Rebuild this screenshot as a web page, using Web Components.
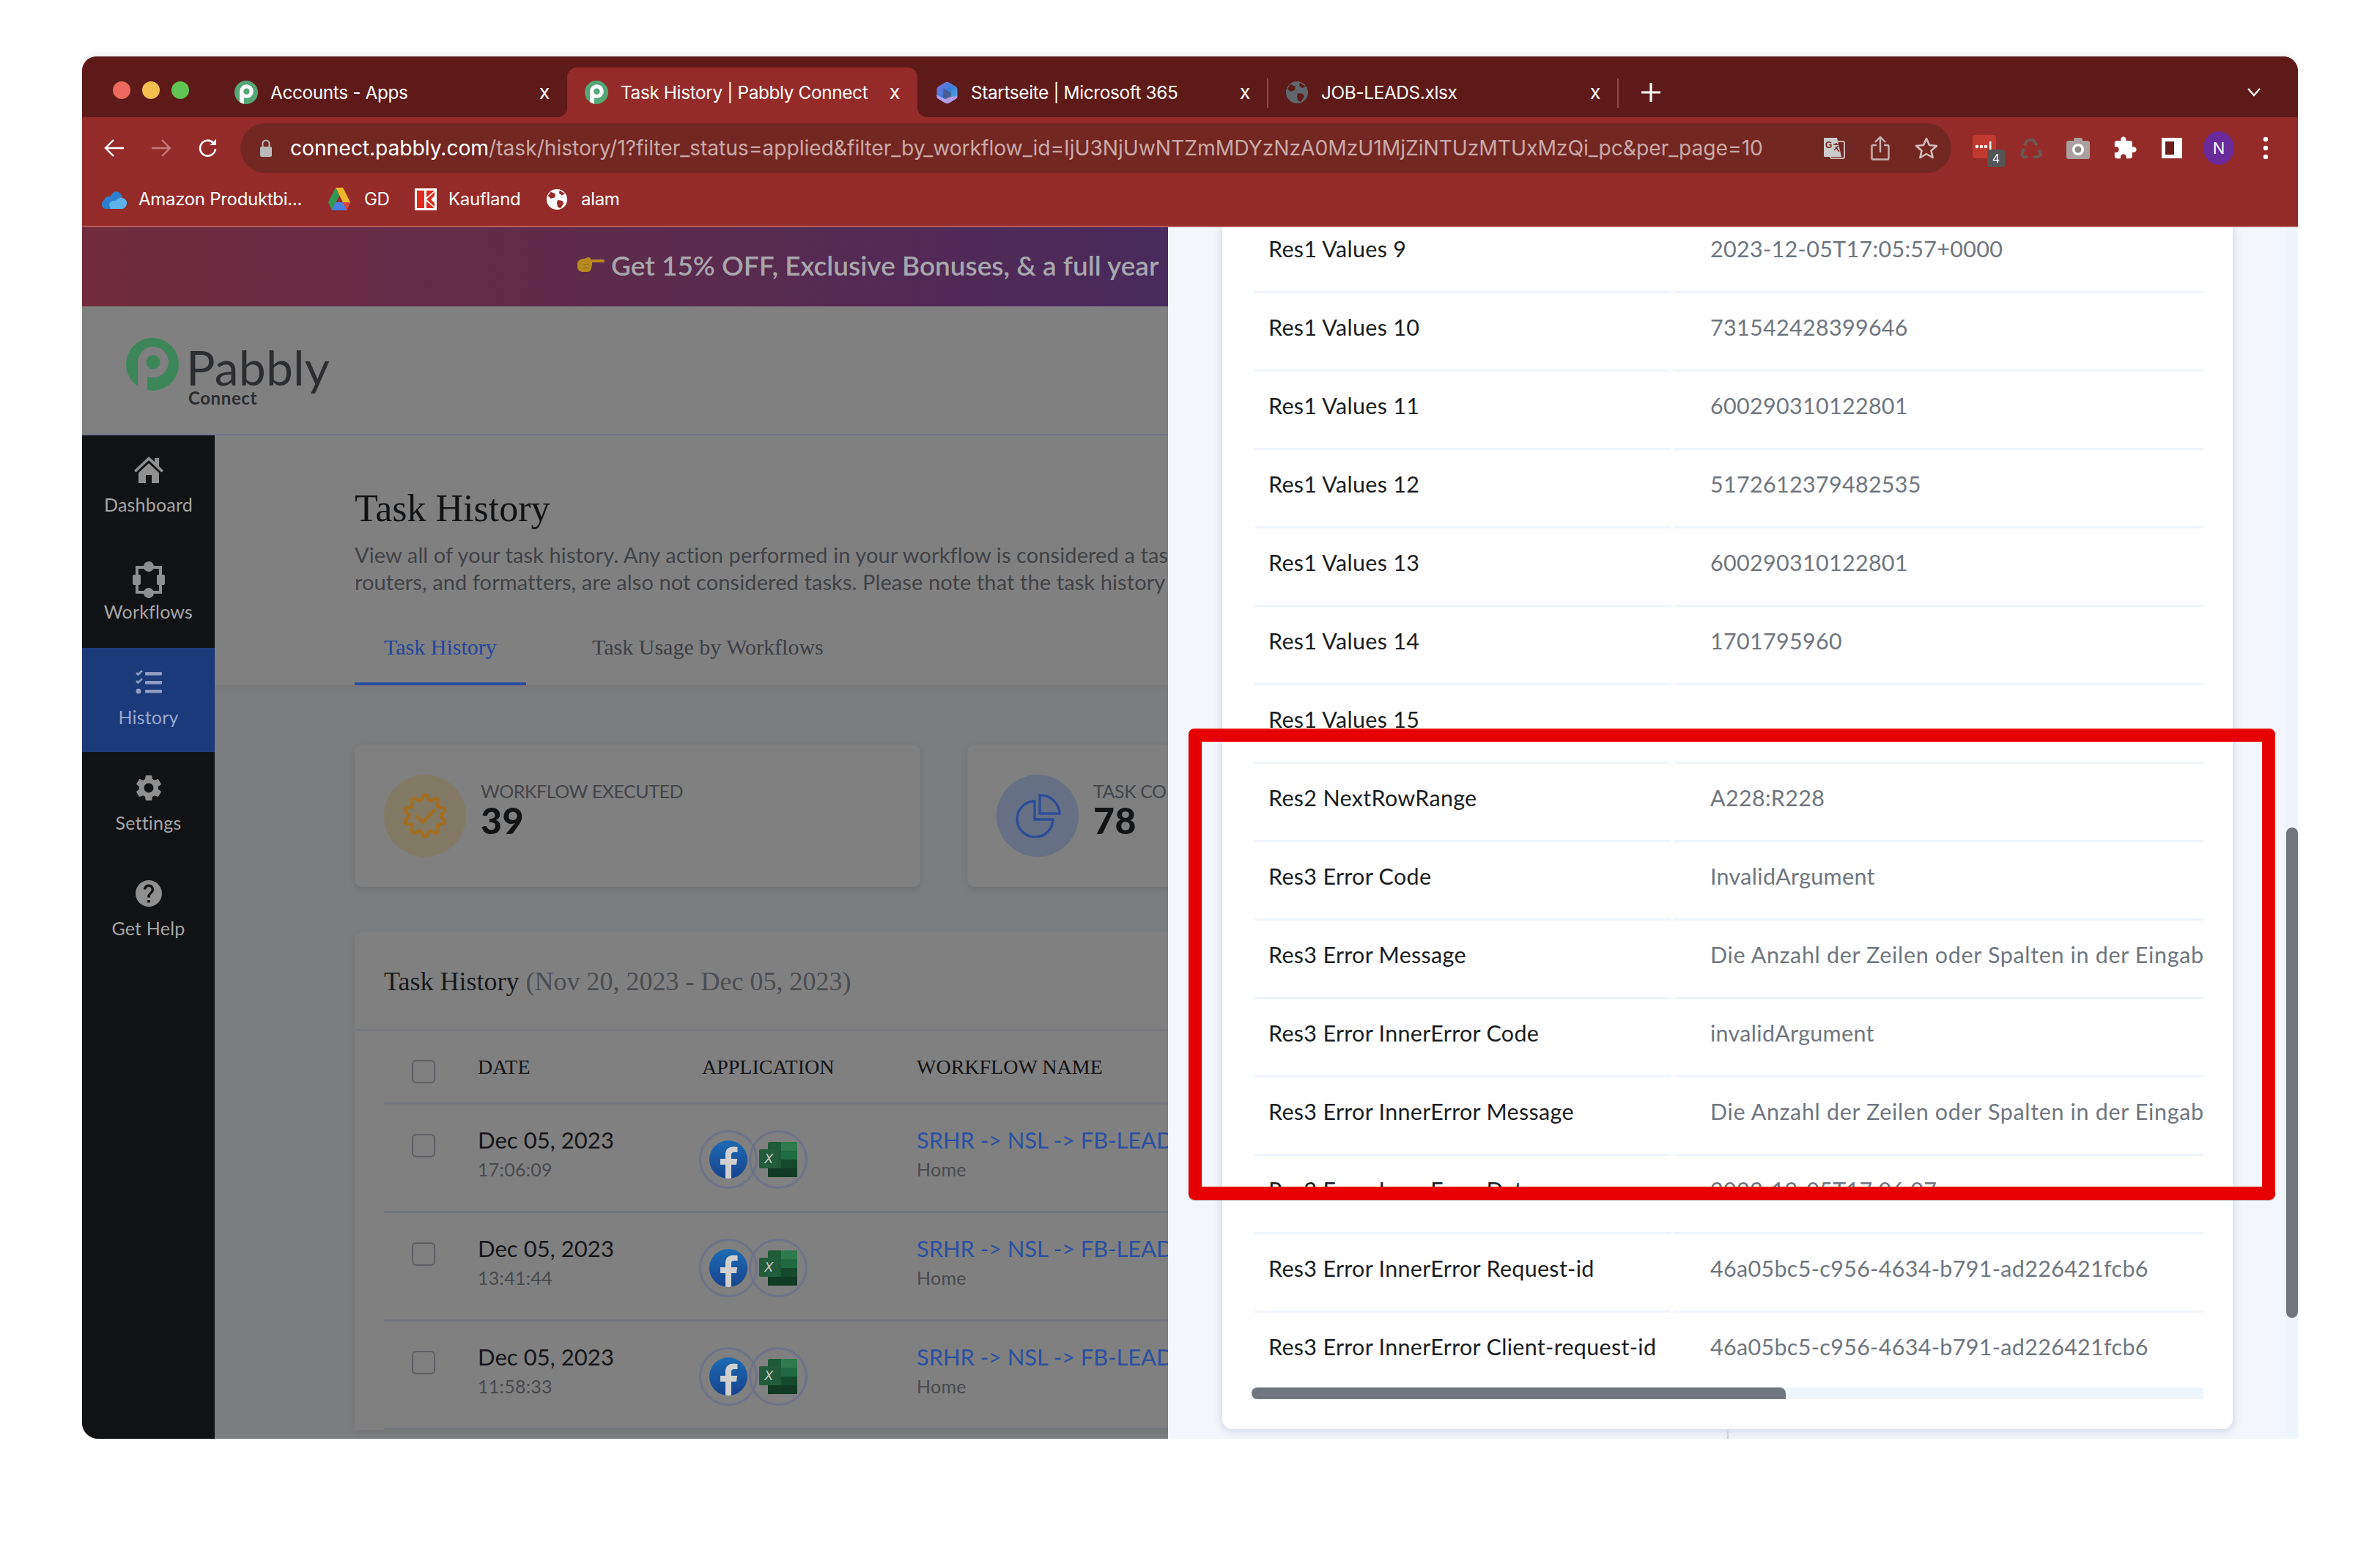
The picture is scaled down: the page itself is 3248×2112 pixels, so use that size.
<!DOCTYPE html>
<html lang="en"><head><meta charset="utf-8"><title>Task History | Pabbly Connect</title>
<style>
html,body{margin:0;background:#fff}
body{width:3248px;height:2112px;overflow:hidden;padding:77px 112px 0;box-sizing:border-box;font-family:Lato,"Liberation Sans",sans-serif}
</style></head><body>
<app-window></app-window>
<script>
const pabbly=(bg,fg)=>`<svg viewBox="0 0 72 72" width="100%" height="100%"><defs><clipPath id="pc"><circle cx="36" cy="36" r="36"/></clipPath></defs><circle cx="36" cy="36" r="36" fill="${bg}"/><g clip-path="url(#pc)"><circle cx="37" cy="33" r="21" fill="${fg}"/><rect x="16" y="33" width="13" height="40" fill="${fg}"/><circle cx="37" cy="33" r="9.5" fill="${bg}"/></g></svg>`;
const scallop=(()=>{let d='';for(let i=0;i<=240;i++){const t=i/240*Math.PI*2,r=25+3.4*Math.cos(t*10),x=32+r*Math.sin(t),y=32-r*Math.cos(t);d+=(i?'L':'M')+x.toFixed(2)+' '+y.toFixed(2)}return d+'Z'})();
const ICONS={
 pabbly:pabbly('#55a876','#fff'),
 logo:pabbly('#3c8659','#808080'),
 ms365:`<svg viewBox="0 0 32 34" width="100%" height="100%"><defs><linearGradient id="m" x1="0" y1="0" x2="1" y2="1"><stop offset="0" stop-color="#7e6fe0"/><stop offset=".5" stop-color="#3a7fd8"/><stop offset="1" stop-color="#5fb7e8"/></linearGradient></defs><path d="M13 1.500c2-1.200 4-1.200 6 0L29 7.500c1.500 1 2.500 2.500 2.500 4.500v10c0 2-1 3.500-2.500 4.500L19 32.500c-2 1.200-4 1.200-6 0L3 26.500C1.500 25.500.5 24 .5 22V12c0-2 1-3.500 2.500-4.500Z" fill="url(#m)"/><path d="M10 10 22 17V24L16 27 10 24Z" fill="#5e1a18" opacity=".35"/><path d="M.5 20 13 27l9-4 9.500 -1c0 2-1 3.500-2.500 4.500L19 32.500c-2 1.200-4 1.200-6 0L3 26.500C1.500 25.500.5 24 .5 22Z" fill="#b59be8"/></svg>`,
 globeDark:`<svg viewBox="0 0 32 32" width="32" height="32"><circle cx="16" cy="16" r="15" fill="#5f676d"/><path d="M7 5 14 8 13 13 7 15 3 11ZM17 17 24 18 26 22 21 29 17 27 16 21ZM20 3 28 8 23 10 19 7Z" fill="#5e1a18"/></svg>`,
 globeWhite:`<svg viewBox="0 0 32 32" width="30" height="30"><circle cx="16" cy="16" r="15" fill="#fff"/><path d="M7 5 14 8 13 13 7 15 3 11ZM17 17 24 18 26 22 21 29 17 27 16 21ZM20 3 28 8 23 10 19 7Z" fill="#952b28"/></svg>`,
 back:`<svg viewBox="0 0 28 26" width="28" height="26" fill="none" stroke="currentColor" stroke-width="2.4"><path d="M27 13H3M13 2 2 13l11 11"/></svg>`,
 fwd:`<svg viewBox="0 0 28 26" width="28" height="26" fill="none" stroke="currentColor" stroke-width="2.4"><path d="M1 13H25M15 2l11 11-11 11"/></svg>`,
 reload:`<svg viewBox="0 0 28 28" width="28" height="28" fill="none" stroke="#fff" stroke-width="2.6"><path d="M24 15a10.5 10.5 0 1 1-3-8.2"/><path d="M25 1.5V10h-8.5Z" fill="#fff" stroke="none"/></svg>`,
 lock:`<svg viewBox="0 0 18 26" width="18" height="26"><path d="M4.5 11V7a4.500 4.500 0 0 1 9 0v4" fill="none" stroke="#b9b9b9" stroke-width="2"/><rect x="1" y="11" width="16" height="14" rx="2" fill="#b9b9b9"/></svg>`,
 translate:`<svg viewBox="0 0 30 30" width="30" height="30"><rect x="10" y="6" width="19" height="23" rx="2" fill="none" stroke="#c9b2b2" stroke-width="2"/><path d="M1 2a1 1 0 0 1 1-1h17l6 26H2a1 1 0 0 1-1-1Z" fill="#cbcbcb"/><text x="3" y="15" font-family="Liberation Sans" font-size="12" font-weight="700" fill="#752723">G</text><path d="M14 10h8M18 8v3M15 18l6-6M17 13l5 7" stroke="#752723" stroke-width="1.500" fill="none"/></svg>`,
 share:`<svg viewBox="0 0 26 34" width="26" height="34" fill="none" stroke="#c9b2b2" stroke-width="2.4"><path d="M8 13H3a1.500 1.500 0 0 0-1.500 1.500V31A1.500 1.500 0 0 0 3 32.500h20a1.500 1.500 0 0 0 1.500-1.500V14.500A1.500 1.500 0 0 0 23 13h-5"/><path d="M13 23V2M6 9l7-7 7 7"/></svg>`,
 star:`<svg viewBox="0 0 32 32" width="32" height="32" fill="none" stroke="#d3bcbc" stroke-width="2.6" stroke-linejoin="round"><path d="m16 3 4 9 10 1-7.500 6.600L24.600 29 16 24l-8.600 5 2.100-9.400L2 13l10-1Z"/></svg>`,
 ext:`<svg viewBox="0 0 56 48" width="56" height="48"><rect x="12" y="0" width="32" height="32" rx="4" fill="#c0392f"/><circle cx="18" cy="16" r="2.300" fill="#fff"/><circle cx="24" cy="16" r="2.300" fill="#fff"/><circle cx="30" cy="16" r="2.300" fill="#fff"/><rect x="35" y="9" width="2.500" height="11" fill="#fff"/><rect x="32" y="20" width="24" height="24" rx="3" fill="#555"/><text x="44" y="38" text-anchor="middle" font-family="Liberation Sans" font-size="17" fill="#fff">4</text></svg>`,
 recycle:`<svg viewBox="0 0 32 32" width="30" height="30" fill="none" stroke="#6b5956" stroke-width="4"><path d="M12 4h7l5 8M27 19l3 7-4 3h-7M11 29H5l-3-4 4-8M6 12l5-8"/></svg>`,
 camera:`<svg viewBox="0 0 32 30" width="32" height="30"><path d="M10 5V3a2 2 0 0 1 2-2h8a2 2 0 0 1 2 2v2h7a3 3 0 0 1 3 3v19a3 3 0 0 1-3 3H3a3 3 0 0 1-3-3V8a3 3 0 0 1 3-3Z" fill="#a9a09f"/><circle cx="16" cy="17" r="8" fill="#fff"/><circle cx="16" cy="17" r="4.500" fill="#8e8786"/></svg>`,
 puzzle:`<svg viewBox="0 0 24 24" width="34" height="34" fill="#fff"><path d="M20.500 11H19V7c0-1.100-.9-2-2-2h-4V3.500C13 2.120 11.880 1 10.500 1S8 2.120 8 3.500V5H4c-1.100 0-1.990.9-1.990 2v3.800H3.500c1.490 0 2.700 1.210 2.700 2.700s-1.210 2.700-2.700 2.700H2V20c0 1.100.9 2 2 2h3.800v-1.500c0-1.490 1.210-2.700 2.700-2.700 1.490 0 2.700 1.210 2.700 2.700V22H17c1.100 0 2-.9 2-2v-4h1.500c1.380 0 2.500-1.120 2.500-2.500S21.880 11 20.500 11z"/></svg>`,
 panel:`<svg viewBox="0 0 28 28" width="28" height="28"><rect width="28" height="28" fill="#fff"/><rect x="5" y="5" width="12" height="18" fill="#6a1f1c"/></svg>`,
 kebab:`<svg viewBox="0 0 8 32" width="8" height="32" fill="#fff"><circle cx="4" cy="4" r="3.200"/><circle cx="4" cy="16" r="3.200"/><circle cx="4" cy="28" r="3.200"/></svg>`,
 plus:`<svg viewBox="0 0 26 26" width="26" height="26" stroke="#fff" stroke-width="3.200"><path d="M13 0v26M0 13h26"/></svg>`,
 chevron:`<svg viewBox="0 0 18 12" width="18" height="12" fill="none" stroke="#fff" stroke-width="2.200"><path d="M1 1l8 9 8-9"/></svg>`,
 cloud:`<svg viewBox="0 0 34 26" width="34" height="26"><path d="M3 14C5 9 9 8 12 9 14 3 20 0 24 4c3 2 4 5 4 7 3 1 6 3 6 7 0 5-4 8-7 8H6c-4 0-6-3-6-6 0-3 1-5 3-6Z" fill="#2f7fd0"/><path d="M12 26H27c3 0 7-3 7-8 0-4-3-6-6-7-4-1-7 1-9 4-4-1-8 1-9 5Z" fill="#5cb3ea"/></svg>`,
 drive:`<svg viewBox="0 0 30 32" width="30" height="32"><path d="M10 0h10l10 20h-10Z" fill="#f2b62a" /><path d="M10 0 0 20l5 11L15 11Z" fill="#2e9a55"/><path d="M5 31h20l5-11H10Z" fill="#4a7ee0"/><path d="M20 20 25 31l5-11Z" fill="#d9443a"/></svg>`,
 kaufland:`<svg viewBox="0 0 30 30" width="30" height="30"><rect width="30" height="30" fill="#fff"/><rect x="3" y="3" width="10" height="24" fill="#e0281e"/><path d="M16 3h11v7l-5 5 5 5v7H16v-8Z" fill="#e0281e"/><path d="M13 15 27 3v2L16 15l11 10v2Z" fill="#fff"/></svg>`,
 home:`<svg viewBox="0 0 40 36" width="40" height="36" fill="#909090"><path d="M20 0 28 7V2h6v11l6 6-2.500 2.500L20 5 2.500 21.500 0 19Z"/><path d="M6 22 20 9l14 13v14H24V25h-8v11H6Z"/></svg>`,
 flows:`<svg viewBox="0 0 44 50" width="44" height="50" fill="none"><rect x="6" y="8" width="32" height="34" fill="none" stroke="#8f8f8f" stroke-width="4"/><circle cx="22" cy="7" r="7" fill="#8f8f8f"/><circle cx="22" cy="43" r="7" fill="#8f8f8f"/><rect x="0" y="18" width="11" height="14" rx="2" fill="#8f8f8f"/><rect x="33" y="18" width="11" height="14" rx="2" fill="#8f8f8f"/></svg>`,
 tasks:`<svg viewBox="0 0 36 34" width="36" height="34" fill="#8d9cc0"><rect x="13" y="3" width="23" height="4.500" rx="1"/><rect x="13" y="15" width="23" height="4.500" rx="1"/><rect x="13" y="27" width="23" height="4.500" rx="1"/><circle cx="4" cy="29" r="3.500"/><path d="M1 4l2.500 2.500L9 1M1 15l2.500 2.500L9 12" fill="none" stroke="#8d9cc0" stroke-width="2.600"/></svg>`,
 gear:`<svg viewBox="2 2 20 20" width="36" height="36" fill="#8f8f8f"><path fill-rule="evenodd" d="M19.140 12.940c.04-.3.06-.61.06-.94 0-.32-.02-.64-.07-.94l2.030-1.580c.18-.14.23-.41.12-.61l-1.920-3.320c-.12-.22-.37-.29-.59-.22l-2.390.96c-.5-.38-1.030-.7-1.620-.94l-.36-2.540c-.04-.24-.24-.41-.48-.41h-3.840c-.24 0-.43.17-.47.41l-.36 2.540c-.59.24-1.130.57-1.620.94l-2.390-.96c-.22-.08-.47 0-.59.22L2.740 8.870c-.12.21-.08.47.12.61l2.030 1.580c-.05.3-.09.63-.09.94s.02.64.07.94l-2.030 1.580c-.18.14-.23.41-.12.61l1.920 3.320c.12.22.37.29.59.22l2.390-.96c.5.38 1.030.7 1.620.94l.36 2.540c.05.24.24.41.48.41h3.840c.24 0 .44-.17.47-.41l.36-2.540c.59-.24 1.130-.56 1.620-.94l2.390.96c.22.08.47 0 .59-.22l1.920-3.320c.12-.22.07-.47-.12-.61l-2.010-1.580zM12 15.600c-1.980 0-3.600-1.620-3.600-3.600s1.620-3.600 3.600-3.600 3.600 1.620 3.600 3.600-1.620 3.600-3.600 3.600z"/></svg>`,
 help:`<svg viewBox="2 2 20 20" width="36" height="36" fill="#8f8f8f"><path d="M12 2C6.480 2 2 6.480 2 12s4.480 10 10 10 10-4.480 10-10S17.520 2 12 2zm1 17h-2v-2h2v2zm2.070-7.750l-.9.92C13.450 12.900 13 13.500 13 15h-2v-.5c0-1.100.45-2.100 1.170-2.830l1.240-1.260c.37-.36.59-.86.59-1.410 0-1.100-.9-2-2-2s-2 .9-2 2H8c0-2.210 1.790-4 4-4s4 1.790 4 4c0 .88-.36 1.680-.93 2.250z"/></svg>`,
 badge:`<svg viewBox="0 0 64 64" width="64" height="64" fill="none" stroke="#a26f22" stroke-width="4.500"><path d="${scallop}"/><path d="M21 33l8 8 15-16" stroke-linecap="round" stroke-linejoin="round"/></svg>`,
 pie:`<svg viewBox="0 0 64 60" width="64" height="60" fill="none" stroke="#2c4d96" stroke-width="3.400"><path d="M28 10A24.500 24.500 0 1 0 53 35H28Z"/><path d="M35 2A26 26 0 0 1 62 27H35Z"/></svg>`,
 fb:`<svg viewBox="0 0 52 52" width="52" height="52"><defs><linearGradient id="f" x1="0" y1="0" x2="0" y2="1"><stop offset="0" stop-color="#1c6bb4"/><stop offset="1" stop-color="#17438c"/></linearGradient><clipPath id="fc"><circle cx="26" cy="26" r="26"/></clipPath></defs><circle cx="26" cy="26" r="26" fill="url(#f)"/><path clip-path="url(#fc)" d="M30 53V33h7l1.200-8H30v-5c0-2.400 1-4 4-4h4.500V9c-1-.2-3.500-.4-6-.4-6 0-10.500 3.600-10.500 10.400v6h-7v8h7v20Z" fill="#d0d0d0"/></svg>`,
 xl:`<svg viewBox="0 0 52 48" width="52" height="48"><rect x="12" y="0" width="40" height="48" rx="2" fill="#1d5a38"/><rect x="30" y="0" width="22" height="12" fill="#2d7a4c"/><rect x="30" y="12" width="22" height="12" fill="#1f6a40"/><rect x="30" y="24" width="22" height="12" fill="#15492c"/><rect x="12" y="36" width="40" height="12" fill="#103a24"/><rect x="0" y="10" width="26" height="26" rx="2" fill="#235c3a"/><text x="13" y="29" text-anchor="middle" font-family="Liberation Sans" font-size="18" fill="#c9c9c9">X</text></svg>`,
 hand:`<svg viewBox="0 0 38 26" width="38" height="26"><path d="M1 10C2 6 6 4 10 4l6-2c2 0 3 1 3 3h17c1.500 0 2 1 2 2s-.5 2-2 2H21c0 3 0 5-1 7 0 3-2 6-5 6H8c-4 0-7-4-7-7Z" fill="#b78a1f"/><path d="M8 12c3 0 7 0 9-1M8 17c3 0 6 0 8-1" stroke="#8c6815" fill="none"/></svg>`
};
function define(name,css,render){
 customElements.define(name,class extends HTMLElement{
  connectedCallback(){ if(this.shadowRoot)return;
   const s=this.attachShadow({mode:'open'});
   s.innerHTML=`<style>*{box-sizing:border-box}${css}</style>`+render(this);
  }
 });
}
const a=(e,n,d='')=>e.getAttribute(n)??d;

define('x-icon',`:host{display:inline-flex;align-items:center;justify-content:center;flex:none}svg{display:block}`,e=>ICONS[a(e,'name')]);

/* ---------- browser chrome ---------- */
define('traffic-lights',`:host{display:flex;gap:16px;width:184px;padding:19px 0 0 42px;flex:none}i{width:24px;height:24px;border-radius:50%}`,
 ()=>`<i style="background:#ec6a5e"></i><i style="background:#f4bf4f"></i><i style="background:#61c554"></i>`);
define('browser-tab',`
 :host{display:flex;align-items:center;width:478px;height:68px;padding-left:24px;flex:none;position:relative;color:#fff;font:24.4px/36px Inter,"Liberation Sans",sans-serif;letter-spacing:-.38px}
 :host([active]){background:#952b28;border-radius:14px 14px 0 0}
 :host([active])::before,:host([active])::after{content:"";position:absolute;bottom:0;width:14px;height:14px}
 :host([active])::before{left:-14px;background:radial-gradient(circle at 0 0,transparent 14px,#952b28 14.500px)}
 :host([active])::after{right:-14px;background:radial-gradient(circle at 100% 0,transparent 14px,#952b28 14.500px)}
 :host([sep])::after{content:"";position:absolute;right:-1px;top:15px;height:40px;width:2px;background:#8d4a47}
 .ic{width:32px;height:40px;display:flex;align-items:center;justify-content:center}
 .t{margin-left:17px;width:358px;white-space:nowrap;overflow:hidden}
 .x{width:32px;text-align:center;font-size:27px;font-weight:400}
`,e=>`<span class="ic"><x-icon name="${a(e,'icon')}" style="width:${a(e,'iw','32')}px;height:${a(e,'ih','32')}px"></x-icon></span><span class="t"><slot></slot></span><span class="x">x</span>`);
define('tab-strip',`:host{display:flex;height:83px;background:#5e1a18;padding-top:15px;position:relative}
 .tabs{display:flex}.end{display:flex;align-items:center;height:68px;padding-left:32px}.ch{margin-left:801px}`,
 ()=>`<traffic-lights></traffic-lights><div class="tabs"><slot></slot></div><div class="end"><x-icon name="plus"></x-icon><x-icon class="ch" name="chevron"></x-icon></div>`);
define('address-bar',`:host{display:flex;align-items:center;width:2335px;height:68px;background:#732723;border-radius:34px;padding:0 3px 0 26px;flex:none;font:28.3px/40px Inter,"Liberation Sans",sans-serif;color:#caa9a7;letter-spacing:-.08px}
 .u{margin-left:24px;flex:1;white-space:nowrap;overflow:hidden}b{font-weight:400;color:#fff}.i{width:63px;display:flex;justify-content:center}`,
 ()=>`<x-icon name="lock"></x-icon><span class="u"><b>connect.pabbly.com</b>/task/history/1?filter_status=applied&amp;filter_by_workflow_id=IjU3NjUwNTZmMDYzNzA0MzU1MjZiNTUzMTUxMzQi_pc&amp;per_page=10</span><span class="i"><x-icon name="translate"></x-icon></span><span class="i"><x-icon name="share"></x-icon></span><span class="i"><x-icon name="star"></x-icon></span>`);
define('tool-button',`:host{display:flex;width:64px;height:68px;align-items:center;justify-content:center;flex:none;color:#fff}`,()=>`<slot></slot>`);
define('browser-toolbar',`:host{display:flex;align-items:flex-start;height:84px;padding:8px 0 0 12px;background:#952b28}
 address-bar{margin:0 13px 0 12px}
 .av{width:42px;height:46px;border-radius:50%;background:#6a2a9c;color:#fff;font:22px/46px Inter,sans-serif;text-align:center}`,
 ()=>`<tool-button><x-icon name="back"></x-icon></tool-button><tool-button style="color:#c77d79"><x-icon name="fwd"></x-icon></tool-button><tool-button><x-icon name="reload"></x-icon></tool-button><address-bar></address-bar>
 <tool-button><x-icon name="ext" style="margin-top:12px"></x-icon></tool-button><tool-button><x-icon name="recycle"></x-icon></tool-button><tool-button><x-icon name="camera"></x-icon></tool-button><tool-button><x-icon name="puzzle"></x-icon></tool-button><tool-button><x-icon name="panel"></x-icon></tool-button><tool-button><div class="av">N</div></tool-button><tool-button><x-icon name="kebab"></x-icon></tool-button>`);
define('bm-item',`:host{display:flex;align-items:center;flex:none;color:#fff;font:24px/36px Inter,"Liberation Sans",sans-serif;letter-spacing:-.3px;white-space:nowrap}span{margin-left:var(--g,16px)}`,
 e=>`<x-icon name="${a(e,'icon')}"></x-icon><span><slot></slot></span>`);
define('bookmark-bar',`:host{display:flex;height:66px;padding:10px 0 0 27px;align-items:flex-start;background:#952b28;border-bottom:2px solid #b85c5a}`,()=>`<slot></slot>`);

/* ---------- Pabbly page (dimmed) ---------- */
define('promo-banner',`:host{display:flex;height:108px;justify-content:flex-end;align-items:center;background:linear-gradient(90deg,#712b3c,#482a5c);white-space:nowrap;font:600 37px/50px Lato,sans-serif;color:#a8a6ad;padding-bottom:4px}
 .w{display:flex;align-items:center;width:807px;overflow:hidden}span{margin-left:9px}`,
 ()=>`<div class="w"><x-icon name="hand"></x-icon><span>Get 15% OFF, Exclusive Bonuses, &amp; a full year</span></div>`);
define('page-header',`:host{display:flex;height:176px;background:#808080;border-bottom:2px solid #72758a;padding:43px 0 0 60px;flex:none}
 .m{width:72px;height:72px}.t{margin-left:10px;color:#2c2d30;height:110px}
 .p{font:400 66px/62px Lato,sans-serif;letter-spacing:.2px;margin-top:9px;display:block}
 .c{font:700 24px/22px Lato,sans-serif;display:block;margin-top:0;letter-spacing:.6px;margin-left:3px}`,
 ()=>`<x-icon class="m" name="logo"></x-icon><div class="t"><span class="p">Pabbly</span><span class="c">Connect</span></div>`);
define('side-item',`:host{display:flex;flex-direction:column;align-items:center;height:var(--h,144px);padding-top:var(--p,28px);color:#a6a6a6;font:25px/36px Lato,sans-serif;letter-spacing:.2px}
 :host([active]){background:#1b3a7a;color:#97a8cc}.i{height:42px;display:flex;align-items:center}.l{margin-top:var(--lg,8px)}`,
 e=>`<span class="i"><x-icon name="${a(e,'icon')}"></x-icon></span><span class="l"><slot></slot></span>`);
define('side-nav',`:host{display:block;width:181px;background:#111214;flex:none}`,()=>`<slot></slot>`);
define('page-intro',`:host{display:block;height:341px;background:#808080;padding:70px 0 0 191px;white-space:nowrap;box-shadow:0 2px 8px rgba(0,0,0,.05);position:relative}
 h1{font:400 52px/60px "Liberation Serif",serif;color:#121315;margin:0 0 14px}
 p{font:29px/37px Lato,sans-serif;color:#404246;margin:0;letter-spacing:.1px}
 nav{display:flex;margin-top:51px;font:30px/40px "Liberation Serif",serif;color:#3d3f44}
 a{display:block;padding:0 40px 28px}a.on{color:#22469c;border-bottom:4px solid #2a4da0;width:234px;white-space:nowrap}a+a{margin-left:50px}`,
 ()=>`<h1>Task History</h1><p>View all of your task history. Any action performed in your workflow is considered a task. Triggers,<br>routers, and formatters, are also not considered tasks. Please note that the task history is kept for</p><nav><a class="on">Task History</a><a>Task Usage by Workflows</a></nav>`);
define('stat-card',`:host{display:flex;flex:none;width:772px;height:194px;background:#808080;border-radius:10px;box-shadow:0 3px 10px rgba(0,0,0,.1);padding:41px 0 0 40px;color:#121315}
 .c{width:112px;height:112px;border-radius:50%;display:flex;align-items:center;justify-content:center;background:var(--c)}
 .t{margin-left:20px}.k{font:25px/30px Lato,sans-serif;color:#43454a;white-space:nowrap;margin-top:7px;letter-spacing:-.45px}.v{font:900 50px/50px Lato,sans-serif;letter-spacing:.6px}`,
 e=>`<div class="c"><x-icon name="${a(e,'icon')}"></x-icon></div><div class="t"><div class="k">${a(e,'label')}</div><div class="v">${a(e,'value')}</div></div>`);
define('tick-box',`:host{display:block;width:32px;height:32px;border:2px solid #5f6064;border-radius:6px}`,()=>``);
define('app-pair',`:host{display:flex}i{width:80px;height:80px;border-radius:50%;border:3px solid #6f7389;display:flex;align-items:center;justify-content:center;flex:none}i+i{margin-left:-12px}`,
 ()=>`<i><x-icon name="fb"></x-icon></i><i><x-icon name="xl"></x-icon></i>`);
define('task-row',`:host{display:grid;grid-template-columns:128px 306px 293px 1fr;height:148px;border-bottom:3px solid #74767d;white-space:nowrap}
 tick-box{margin:40px 0 0 38px}.d{padding-top:28px}.a{padding-top:35px}
 .m{font:31px/40px Lato,sans-serif;color:#141518;letter-spacing:.05px}.s{font:25px/41px Lato,sans-serif;color:#48494d;letter-spacing:.3px}
 .l{color:#2a50a0;letter-spacing:-.12px}`,
 e=>`<tick-box></tick-box><div class="d"><div class="m">${a(e,'date')}</div><div class="s">${a(e,'time')}</div></div><div class="a"><app-pair style="margin-left:-4px"></app-pair></div><div class="d"><div class="m l">SRHR -&gt; NSL -&gt; FB-LEADS</div><div class="s">Home</div></div>`);
define('task-table',`:host{display:block;margin-top:61px;width:1400px;background:#808080;border-radius:10px 10px 0 0;padding:0 40px;box-shadow:0 3px 10px rgba(0,0,0,.06);white-space:nowrap}
 .ti{height:135px;margin:0 -40px;padding:46px 0 0 40px;border-bottom:2px solid #74767f;font:36px/44px "Liberation Serif",serif;color:#17181a}.ti span{color:#4b4d52}
 .h{display:grid;grid-template-columns:128px 306px 293px 1fr;height:101px;border-bottom:3px solid #74767d;font:28px/36px "Liberation Serif",serif;color:#121315}
 .h div{padding-top:32px}tick-box{margin:40px 0 0 38px}`,
 ()=>`<div class="ti">Task History <span>(Nov 20, 2023 - Dec 05, 2023)</span></div><div class="h"><tick-box></tick-box><div>DATE</div><div>APPLICATION</div><div>WORKFLOW NAME</div></div><slot></slot>`);
define('page-main',`:host{display:block;flex:1;min-width:0;background:#7c7d7f;overflow:hidden}.b{padding-left:191px}.r{display:flex;gap:64px;margin-top:81px;width:2000px}`,
 ()=>`<page-intro></page-intro><div class="b"><div class="r"><stat-card icon="badge" label="WORKFLOW EXECUTED" value="39" style="--c:#837a66"></stat-card><stat-card icon="pie" label="TASK COMPLETED" value="78" style="--c:#667085"></stat-card></div><task-table><slot></slot></task-table></div>`);
define('page-left',`:host{display:flex;flex-direction:column;width:1482px;flex:none;overflow:hidden;background:#7c7d7f;border-bottom-left-radius:22px}.b{display:flex;flex:1;min-height:0}`,
 ()=>`<promo-banner></promo-banner><page-header></page-header><div class="b"><side-nav><side-item icon="home" style="--p:26px">Dashboard</side-item><side-item icon="flows" style="--p:32px;--h:146px;--lg:4px">Workflows</side-item><side-item icon="tasks" active style="--h:142px;--p:26px;--lg:8px">History</side-item><side-item icon="gear" style="--p:28px">Settings</side-item><side-item icon="help" style="--p:28px">Get Help</side-item></side-nav><page-main><slot></slot></page-main></div>`);

/* ---------- details drawer ---------- */
define('kv-row',`:host{display:grid;grid-template-columns:568px 723px;column-gap:4px;height:107px;font:30.5px/60px Lato,sans-serif;letter-spacing:.3px;white-space:nowrap}
 div{border-bottom:3px solid #f0f5fc;padding-top:16px;overflow:hidden}.k{padding-left:19px;color:#1a1d1f}.v{padding-left:50px;color:#6f767e}
 :host([long]) .v{letter-spacing:.66px}
 :host([last]){height:102px}:host([last]) div{border:0}`,
 e=>`<div class="k">${a(e,'k')}</div><div class="v">${a(e,'v')}</div>`);
define('h-scroll',`:host{display:block;width:1299px;height:16px;margin-left:-4px;background:#eff5fd}i{display:block;width:729px;height:16px;background:#6f767e;border-radius:8px 8px 0 8px}`,()=>`<i></i>`);
define('detail-card',`:host{display:block;width:1379px;height:1640px;background:#fff;border-radius:0 0 14px 14px;box-shadow:0 2px 12px rgba(90,110,180,.28)}
 .c{height:1640px;overflow:hidden;padding:0 40px 0 44px}.i{margin-top:-17px}`,
 ()=>`<div class="c"><div class="i"><slot></slot></div></div>`);
define('detail-panel',`:host{display:flex;flex:1;min-width:0;background:#f3f6fa;overflow:hidden}
 .m{padding-left:74px;width:1526px;flex:none}.tick{width:2px;height:13px;margin-left:689px;background:#cfd1d6}
 .sb{width:16px;background:#eff5fd;flex:none;padding-top:819px}.sb i{display:block;height:669px;background:#6f767e;border-radius:8px}`,
 ()=>`<div class="m"><detail-card><slot></slot></detail-card><div class="tick"></div></div><div class="sb"><i></i></div>`);
define('highlight-box',`:host{position:absolute;left:1510px;top:917px;width:1483px;height:643px;border:18px solid #e60000;border-radius:8px;box-shadow:0 1px 1px rgba(60,0,0,.35);pointer-events:none}`,()=>``);

/* ---------- window ---------- */
define('app-window',`:host{display:flex;flex-direction:column;position:relative;width:3024px;height:1886px;border-radius:20px 20px 4px 22px;background:#952b28;box-shadow:0 -8px 14px -6px rgba(0,0,0,.09)}
 tab-strip{border-radius:20px 20px 0 0}.b{display:flex;height:1653px}`,
 ()=>`<tab-strip>
  <browser-tab icon="pabbly">Accounts - Apps</browser-tab>
  <browser-tab icon="pabbly" active>Task History | Pabbly Connect</browser-tab>
  <browser-tab icon="ms365" iw="29" ih="31" sep>Startseite | Microsoft 365</browser-tab>
  <browser-tab icon="globeDark" sep>JOB-LEADS.xlsx</browser-tab>
 </tab-strip>
 <browser-toolbar></browser-toolbar>
 <bookmark-bar>
  <bm-item icon="cloud" style="width:309px">Amazon Produktbi...</bm-item>
  <bm-item icon="drive" style="width:118px;--g:19px">GD</bm-item>
  <bm-item icon="kaufland" style="width:179px">Kaufland</bm-item>
  <bm-item icon="globeWhite" style="width:120px;--g:18px">alam</bm-item>
 </bookmark-bar>
 <div class="b">
  <page-left>
   <task-row date="Dec 05, 2023" time="17:06:09"></task-row>
   <task-row date="Dec 05, 2023" time="13:41:44"></task-row>
   <task-row date="Dec 05, 2023" time="11:58:33"></task-row>
  </page-left>
  <detail-panel>
   <kv-row k="Res1 Values 9" v="2023-12-05T17:05:57+0000"></kv-row>
   <kv-row k="Res1 Values 10" v="731542428399646"></kv-row>
   <kv-row k="Res1 Values 11" v="600290310122801"></kv-row>
   <kv-row k="Res1 Values 12" v="5172612379482535"></kv-row>
   <kv-row k="Res1 Values 13" v="600290310122801"></kv-row>
   <kv-row k="Res1 Values 14" v="1701795960"></kv-row>
   <kv-row k="Res1 Values 15" v=""></kv-row>
   <kv-row k="Res2 NextRowRange" v="A228:R228"></kv-row>
   <kv-row k="Res3 Error Code" v="InvalidArgument"></kv-row>
   <kv-row long k="Res3 Error Message" v="Die Anzahl der Zeilen oder Spalten in der Eingabe stimmt nicht"></kv-row>
   <kv-row k="Res3 Error InnerError Code" v="invalidArgument"></kv-row>
   <kv-row long k="Res3 Error InnerError Message" v="Die Anzahl der Zeilen oder Spalten in der Eingabe stimmt nicht"></kv-row>
   <kv-row k="Res3 Error InnerError Date" v="2023-12-05T17:06:07"></kv-row>
   <kv-row k="Res3 Error InnerError Request-id" v="46a05bc5-c956-4634-b791-ad226421fcb6"></kv-row>
   <kv-row last k="Res3 Error InnerError Client-request-id" v="46a05bc5-c956-4634-b791-ad226421fcb6"></kv-row>
   <h-scroll></h-scroll>
  </detail-panel>
 </div>
 <highlight-box></highlight-box>`);
</script>
</body></html>
